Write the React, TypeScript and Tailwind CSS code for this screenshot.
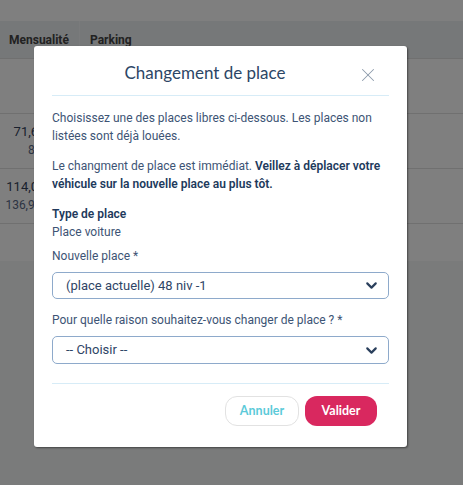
import React from "react";
import { ChevronDown, X } from "lucide-react";

function Select({ value }: { value: string }) {
  return (
    <div className="flex h-full items-center justify-between rounded-[5px] border border-[#8eaacb] pl-[13px] pr-[8px] text-[13px] text-[#2f4566]">
      <span>{value}</span>
      <ChevronDown size={17} strokeWidth={3} className="text-[#2a3f5c]" />
    </div>
  );
}

export default function App() {
  return (
    <div
      className="relative h-[485px] w-[463px] overflow-hidden bg-[#f5f6f6]"
      style={{ fontFamily: "Roboto, 'Liberation Sans', sans-serif" }}
    >
      {/* background page */}
      <div className="h-[21px] bg-white" />
      <div className="bg-white">
        <div className="flex h-[38px] items-center border-b border-[#e0e0e0] bg-[#ecf0f2] text-[12px] font-bold text-[#444]">
          <div className="flex h-full w-[80px] items-center border-r border-[#f4f6f8] pl-[9px]">Mensualité</div>
          <div className="pl-[10px]">Parking</div>
        </div>
        <div className="h-[55px] border-b border-[#e0e0e0]" />
        <div className="flex h-[55px] flex-col justify-center border-b border-[#e0e0e0]">
          <div className="w-[80px] pr-[4px] text-right text-[13px] leading-[18px] text-[#33415a]">71,60 € HT</div>
          <div className="w-[80px] pr-[13px] text-right text-[12px] leading-[18px] text-[#5a6a86]">85,92 €</div>
        </div>
        <div className="flex h-[55px] flex-col justify-center border-b border-[#e0e0e0]">
          <div className="w-[80px] pr-[4px] text-right text-[13px] leading-[18px] text-[#33415a]">114,00 € HT</div>
          <div className="w-[80px] pr-[4px] text-right text-[12px] leading-[18px] text-[#5a6a86]">136,90 € TTC</div>
        </div>
        <div className="h-[37px]" />
      </div>

      {/* overlay */}
      <div className="absolute inset-0 bg-black/50">
        <div className="absolute left-[34px] top-[46px] w-[373px] rounded-[3px] bg-white shadow-[1px_1px_2px_rgba(0,0,0,0.45)]">
          <div className="px-[18px]">
            <div className="relative flex h-[50px] items-end justify-center border-b border-[#d7ecf7] pb-[10px] pr-[31px]">
              <span
                className="text-[17px] leading-[24px] text-[#2c4666]"
                style={{ fontFamily: "Lato, sans-serif" }}
              >
                Changement de place
              </span>
              <X size={22} strokeWidth={1.1} className="absolute right-[10px] top-[18px] text-[#8c9bab]" />
            </div>
            <div className="pt-[13px] text-[12px] leading-[18px] text-[#3d5475]">
              <p>Choisissez une des places libres ci-dessous. Les places non listées sont déjà louées.</p>
              <p className="mt-[12px]">
                Le changment de place est immédiat.{" "}
                <span className="font-semibold text-[#213a5c]">
                  Veillez à déplacer votre véhicule sur la nouvelle place au plus tôt.
                </span>
              </p>
              <p className="mt-[12px] font-semibold text-[#213a5c]">Type de place</p>
              <p>Place voiture</p>
              <p className="mt-[6px]">Nouvelle place *</p>
              <div className="mt-[7px] h-[27px]">
                <Select value="(place actuelle) 48 niv -1" />
              </div>
              <p className="mt-[12px]">Pour quelle raison souhaitez-vous changer de place ? *</p>
              <div className="mt-[7px] h-[28px]">
                <Select value="-- Choisir --" />
              </div>
            </div>
            <div className="mt-[19px] border-t border-[#d7ecf7]" />
            <div
              className="flex justify-end gap-[6px] pr-[12px] pt-[12px] pb-[21px] text-[12.5px] font-bold"
              style={{ fontFamily: "Lato, sans-serif" }}
            >
              <button className="h-[30px] w-[74px] rounded-[12px] border border-[#e2e2e2] bg-white text-[#5ccad9]">
                Annuler
              </button>
              <button className="h-[30px] w-[72px] rounded-[12px] bg-[#d9285f] text-white">Valider</button>
            </div>
          </div>
        </div>
      </div>
    </div>
  );
}
